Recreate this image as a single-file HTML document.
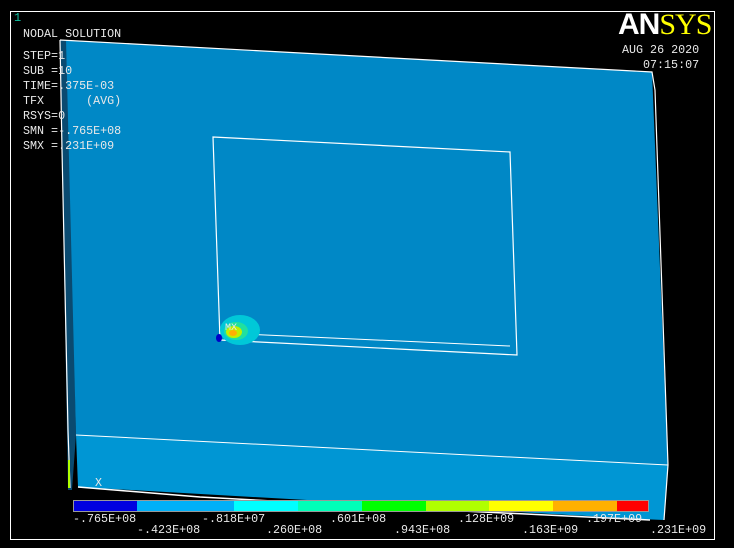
<!DOCTYPE html>
<html><head><style>
html,body{margin:0;padding:0;background:#000;}
body{width:734px;height:548px;overflow:hidden;position:relative;font-family:"Liberation Mono",monospace;}
.t{position:absolute;color:#e8e8e8;font-size:11.7px;line-height:15px;white-space:pre;}
</style></head><body>
<svg width="734" height="548" style="position:absolute;left:0;top:0">
<rect x="10.5" y="11.5" width="704" height="528" fill="none" stroke="#fff" stroke-width="1"/>
<polygon points="60,40 68,40 76,435 72,490 68,490" fill="#0a4a70"/>
<polygon points="66,40 652,72 668,465 76,435" fill="#0088c6"/>
<polygon points="76,435 668,465 664,520 640,519 78,487" fill="#0096d4"/>
<polyline points="60,40 652,72 655,90 668,465 664,520" fill="none" stroke="#fff" stroke-width="1.2"/>
<polyline points="60,40 62,150 68,430 70,488" fill="none" stroke="#fff" stroke-width="1.2"/>
<polyline points="76,435 668,465" fill="none" stroke="#fff" stroke-width="1"/>
<polyline points="78,487 200,497 400,508 650,520" fill="none" stroke="#fff" stroke-width="1.5"/>
<polygon points="213,137 510,152 517,355 220,340" fill="none" stroke="#fff" stroke-width="1.2"/>
<polyline points="222,333 510,346" fill="none" stroke="#fff" stroke-width="1"/>
<ellipse cx="240" cy="330" rx="20" ry="15" fill="#00c8d8"/>
<ellipse cx="236" cy="331" rx="12" ry="9" fill="#20e0a0"/>
<ellipse cx="234" cy="332" rx="8" ry="6" fill="#c0f000"/>
<ellipse cx="233" cy="333" rx="4" ry="3" fill="#ffb000"/>
<ellipse cx="219" cy="338" rx="3" ry="4" fill="#0000c8"/>
<line x1="69" y1="460" x2="69" y2="488" stroke="#b0ff00" stroke-width="2"/>
<rect x="74" y="501" width="63" height="10" fill="#0000e0"/>
<rect x="137" y="501" width="97" height="10" fill="#00b0f8"/>
<rect x="234" y="501" width="64" height="10" fill="#00ffff"/>
<rect x="298" y="501" width="64" height="10" fill="#00ffb8"/>
<rect x="362" y="501" width="64" height="10" fill="#00ff00"/>
<rect x="426" y="501" width="63" height="10" fill="#b0ff00"/>
<rect x="489" y="501" width="64" height="10" fill="#ffff00"/>
<rect x="553" y="501" width="64" height="10" fill="#ffb000"/>
<rect x="617" y="501" width="31" height="10" fill="#ff0000"/>
<rect x="73.5" y="500.5" width="575" height="11" fill="none" stroke="#999" stroke-width="1"/>
</svg>
<div class="t" style="left:14px;top:11px;color:#10c0a0;font-size:12px">1</div>
<div class="t" style="left:23px;top:27px">NODAL SOLUTION</div>
<div class="t" style="left:23px;top:49px">STEP=1
SUB =10
TIME=.375E-03
TFX      (AVG)
RSYS=0
SMN =-.765E+08
SMX =.231E+09</div>
<div style="position:absolute;left:618px;top:8px;font-family:'Liberation Sans',sans-serif;font-weight:bold;font-size:30px;color:#fff;letter-spacing:-1px">AN<span style="color:#ffff00;font-family:'Liberation Serif',serif;font-weight:normal">SYS</span></div>
<div class="t" style="left:622px;top:43px">AUG 26 2020</div>
<div class="t" style="left:643px;top:58px">07:15:07</div>
<div class="t" style="left:225px;top:321px;font-size:10px">MX</div>
<div class="t" style="left:95px;top:476px">X</div>
<div class="t" style="left:73px;top:512px">-.765E+08</div>
<div class="t" style="left:202px;top:512px">-.818E+07</div>
<div class="t" style="left:330px;top:512px">.601E+08</div>
<div class="t" style="left:458px;top:512px">.128E+09</div>
<div class="t" style="left:586px;top:512px">.197E+09</div>
<div class="t" style="left:137px;top:523px">-.423E+08</div>
<div class="t" style="left:266px;top:523px">.260E+08</div>
<div class="t" style="left:394px;top:523px">.943E+08</div>
<div class="t" style="left:522px;top:523px">.163E+09</div>
<div class="t" style="left:650px;top:523px">.231E+09</div>
</body></html>
